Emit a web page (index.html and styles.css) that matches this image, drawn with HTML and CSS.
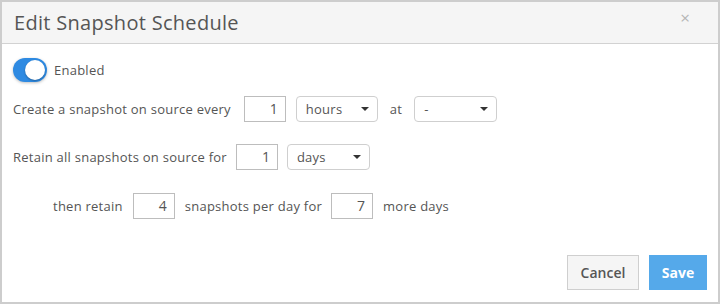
FILE: index.html
```html
<!DOCTYPE html>
<html>
<head>
<meta charset="utf-8">
<link rel="stylesheet" href="styles.css">
</head>
<body>
<div class="modal">
  <div class="header">
    <div class="title">Edit Snapshot Schedule</div>
    <div class="close">&times;</div>
  </div>
  <div class="body">
    <div class="toggle-row">
      <span class="toggle"><span class="knob"></span></span>
      <span class="label">Enabled</span>
    </div>
    <div class="row row1">
      <span class="txt">Create a snapshot on source every</span>
      <span class="num">1</span>
      <span class="sel w82"><span>hours</span><span class="caret"></span></span>
      <span class="txt at">at</span>
      <span class="sel w83"><span>-</span><span class="caret"></span></span>
    </div>
    <div class="row row2">
      <span class="txt">Retain all snapshots on source for</span>
      <span class="num">1</span>
      <span class="sel w83"><span>days</span><span class="caret"></span></span>
    </div>
    <div class="row row3">
      <span class="txt">then retain</span>
      <span class="num">4</span>
      <span class="txt">snapshots per day for</span>
      <span class="num">7</span>
      <span class="txt">more days</span>
    </div>
  </div>
  <div class="footer">
    <button class="btn cancel">Cancel</button>
    <button class="btn save">Save</button>
  </div>
</div>
</body>
</html>
```

FILE: styles.css
```css
html, body { margin: 0; padding: 0; }
body { font-family: "Open Sans", Lato, sans-serif; color: #555; background: #fff; }
.modal {
  width: 720px; height: 304px; box-sizing: border-box;
  border: 2px solid #cdcdcd;
  display: flex; flex-direction: column; background: #fff;
}
.header {
  height: 41px; background: #f5f5f5; border-bottom: 1px solid #d2d2d2;
  display: flex; justify-content: space-between; padding: 0 28px 0 12px;
}
.title { font-size: 20px; line-height: 41px; color: #555; letter-spacing: 0.3px; }
.close { font-size: 17px; color: #b5b5b5; line-height: 1; margin-top: 7px; }
.body { padding: 14px 0 0 11px; flex: 1; display: flex; flex-direction: column; }
.toggle-row { display: flex; align-items: center; height: 24px; }
.toggle {
  width: 34px; height: 24px; border-radius: 12px; background: #2e8ae2;
  display: flex; align-items: center; justify-content: flex-end; padding-right: 2px; box-sizing: border-box;
  box-shadow: 0 1px 3px rgba(0,0,0,0.25);
}
.knob { width: 20px; height: 20px; border-radius: 50%; background: #fff; box-shadow: 0 1px 2px rgba(0,0,0,0.3); }
.label { font-size: 13px; margin-left: 7px; letter-spacing: 0.25px; }
.row { display: flex; align-items: center; font-size: 13px; height: 26px; gap: 10px; }
.row1 { margin-top: 14px; }
.row1 .num { margin-left: 3px; }
.row2 { margin-top: 22px; }
.row2 .num { margin-left: -1px; }
.row2 .sel { margin-left: -1px; }
.row3 { margin-top: 23px; padding-left: 40px; }
.row3 .txt + .num + .txt + .num { margin-left: -1px; }
.txt { white-space: nowrap; letter-spacing: 0.25px; }
.at { margin: 0 2px; }
.num {
  width: 42px; height: 26px; box-sizing: border-box; border: 1px solid #bdbdbd;
  text-align: right; padding-right: 7px; line-height: 24px; font-size: 14px; color: #555;
}
.sel {
  height: 26px; box-sizing: border-box; border: 1px solid #cfcfcf; border-radius: 4px;
  display: flex; align-items: center; justify-content: space-between; padding: 0 8px 0 9px; font-size: 13px;
  letter-spacing: 0.25px;
}
.w82 { width: 82px; }
.w83 { width: 83px; }
.caret { width: 0; height: 0; border-left: 4px solid transparent; border-right: 4px solid transparent; border-top: 4px solid #333; }
.footer { display: flex; justify-content: flex-end; gap: 10px; padding: 0 11px 12px 0; }
.btn { font-family: "Open Sans", Lato, sans-serif; font-size: 14px; font-weight: 600; height: 35px; border-radius: 0; }
.cancel { width: 72px; background: #f5f5f5; border: 1px solid #cfcfcf; color: #555; }
.save { width: 58px; background: #55a9ea; border: 1px solid #55a9ea; color: #fff; font-weight: 700; }
```
